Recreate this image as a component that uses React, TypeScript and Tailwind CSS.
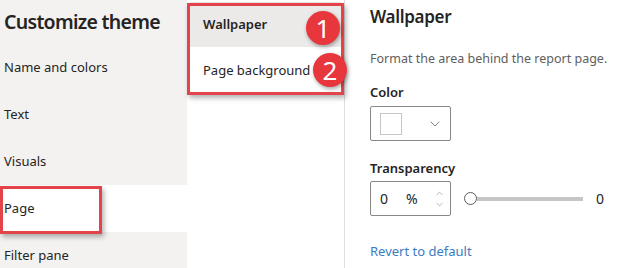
import { ChevronDown, ChevronUp } from "lucide-react";

const NAV = ["Name and colors", "Text", "Visuals", "Page", "Filter pane"];

function Badge({ n, className }: { n: string; className: string }) {
  return (
    <div
      className={`absolute w-[34px] h-[34px] rounded-full bg-[#e8363d] text-white text-[26px] leading-none flex items-center justify-center shadow-[1px_2px_4px_rgba(0,0,0,0.35)] ${className}`}
    >
      {n}
    </div>
  );
}

export default function App() {
  return (
    <div
      className="relative flex w-[623px] h-[268px] overflow-hidden bg-white text-[#252423]"
      style={{ fontFamily: '"Noto Sans", "Open Sans", sans-serif' }}
    >
      {/* Left nav */}
      <div className="w-[187px] shrink-0 bg-[#f3f2f1]">
        <div className="h-[44px] flex items-center pl-[4px] text-[19.5px] font-semibold tracking-[-0.7px]">
          Customize theme
        </div>
        {NAV.map((item) => (
          <div
            key={item}
            className={`relative h-[47px] flex items-center pl-[4px] text-[13px] ${item === "Page" ? "bg-white" : ""}`}
          >
            {item}
            {item === "Page" && (
              <div className="absolute left-0 top-[1px] w-[102px] h-[48px] border-[3px] border-[#e2444a] shadow-[2px_3px_5px_rgba(0,0,0,0.3)]" />
            )}
          </div>
        ))}
      </div>

      {/* Middle list */}
      <div className="relative w-[158px] shrink-0 border-r border-[#e1dfdd] pt-[2px]">
        <div className="h-[45px] mx-[3px] bg-[#eceae8] flex items-center pl-[13px] text-[13px] font-semibold">
          Wallpaper
        </div>
        <div className="h-[47px] mx-[3px] flex items-center pl-[13px] text-[13px]">
          Page background
        </div>
        <div className="absolute left-[0px] top-[3px] w-[157px] h-[92px] border-[3px] border-[#e2444a] shadow-[2px_3px_5px_rgba(0,0,0,0.3)]" />
        <Badge n="1" className="left-[119px] top-[11px]" />
        <Badge n="2" className="left-[126px] top-[53px]" />
      </div>

      {/* Right pane */}
      <div className="flex-1 pl-[25px] pr-2">
        <div className="h-[34px] flex items-center text-[17px] font-semibold tracking-[-0.3px]">Wallpaper</div>
        <div className="mt-[16px] text-[12.5px] text-[#605e5c] leading-[18px]">
          Format the area behind the report page.
        </div>
        <div className="mt-[15px] text-[13px] font-semibold leading-[18px]">Color</div>
        <div className="mt-[5px] w-[81px] h-[35px] border border-[#8a8886] rounded-[2px] flex items-center pl-[9px] pr-[7px] justify-between">
          <div className="w-[22px] h-[22px] border border-[#c8c6c4] bg-white" />
          <ChevronDown className="w-[16px] h-[16px] text-[#605e5c]" strokeWidth={1.2} />
        </div>
        <div className="mt-[18px] text-[13px] font-semibold leading-[18px]">Transparency</div>
        <div className="mt-[4px] flex items-center">
          <div className="w-[81px] h-[35px] border border-[#8a8886] rounded-[2px] flex items-center pl-[9px] pr-[4px] text-[14px]">
            <span className="w-[26px]">0</span>
            <span className="w-[28px]">%</span>
            <div className="flex flex-col items-center text-[#8a8886]">
              <ChevronUp className="w-[11px] h-[11px]" strokeWidth={1.3} />
              <ChevronDown className="w-[11px] h-[11px]" strokeWidth={1.3} />
            </div>
          </div>
          <div className="ml-[13px] flex items-center w-[119px]">
            <div className="w-[13px] h-[13px] rounded-full border-[1.5px] border-[#605e5c] bg-white shrink-0" />
            <div className="flex-1 h-[4px] bg-[#c8c6c4]" />
          </div>
          <span className="ml-[13px] text-[14px]">0</span>
        </div>
        <div className="mt-[26px] text-[13px] text-[#3b7cc4]">Revert to default</div>
      </div>
    </div>
  );
}
